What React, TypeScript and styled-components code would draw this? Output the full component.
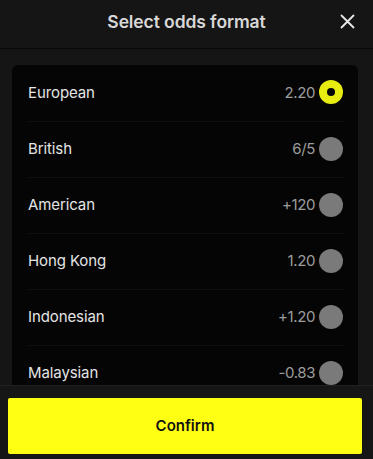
import { useState } from "react";
import styled, { createGlobalStyle } from "styled-components";

type OddsFormat = {
  id: string;
  label: string;
  value: string;
};

const FORMATS: OddsFormat[] = [
  { id: "eu", label: "European", value: "2.20" },
  { id: "uk", label: "British", value: "6/5" },
  { id: "us", label: "American", value: "+120" },
  { id: "hk", label: "Hong Kong", value: "1.20" },
  { id: "id", label: "Indonesian", value: "+1.20" },
  { id: "my", label: "Malaysian", value: "-0.83" },
];

const GlobalStyle = createGlobalStyle`
  html, body {
    margin: 0;
    padding: 0;
    background: #151515;
  }
  * {
    box-sizing: border-box;
  }
`;

const App = () => {
  const [selected, setSelected] = useState("eu");

  return (
    <>
      <GlobalStyle />
      <StyledModal>
        <StyledHeader>
          <StyledTitle>Select odds format</StyledTitle>
          <StyledClose aria-label="Close">
            <svg width="15" height="15" viewBox="0 0 15 15">
              <path
                d="M1.5 1.5 L13.5 13.5 M13.5 1.5 L1.5 13.5"
                stroke="#e8e8e8"
                strokeWidth="1.8"
                strokeLinecap="round"
              />
            </svg>
          </StyledClose>
        </StyledHeader>
        <StyledBody>
          <StyledList>
            {FORMATS.map((f) => (
              <StyledRow key={f.id} onClick={() => setSelected(f.id)}>
                <StyledLabel>{f.label}</StyledLabel>
                <StyledValue>{f.value}</StyledValue>
                <StyledRadio $active={selected === f.id} />
              </StyledRow>
            ))}
          </StyledList>
        </StyledBody>
        <StyledFooter>
          <StyledConfirm>Confirm</StyledConfirm>
        </StyledFooter>
      </StyledModal>
    </>
  );
};

const StyledModal = styled.div`
  height: 100vh;
  display: flex;
  flex-direction: column;
  background: #151515;
  font-family: Inter, "Liberation Sans", sans-serif;
`;

const StyledHeader = styled.div`
  height: 49px;
  flex: none;
  display: flex;
  align-items: center;
  justify-content: center;
  position: relative;
  border-bottom: 1px solid #080808;
`;

const StyledTitle = styled.h1`
  margin: 0;
  font-size: 17.5px;
  font-weight: 600;
  color: #d8d8d8;
  letter-spacing: -0.1px;
  padding-bottom: 5px;
`;

const StyledClose = styled.button`
  position: absolute;
  right: 18px;
  top: 14px;
  padding: 0;
  border: none;
  background: none;
  display: flex;
  cursor: pointer;
`;

const StyledBody = styled.div`
  flex: 1;
  min-height: 0;
  overflow: hidden;
  padding: 16px 15px 0 12px;
`;

const StyledList = styled.div`
  background: #050505;
  border-radius: 6px;
  padding: 0 15px 0 16px;
`;

const StyledRow = styled.div`
  height: 56px;
  display: flex;
  align-items: center;
  padding-bottom: 2px;
  cursor: pointer;
  & + & {
    border-top: 1px solid #101010;
  }
`;

const StyledLabel = styled.span`
  flex: 1;
  font-size: 15px;
  color: #e4e4e4;
  letter-spacing: -0.1px;
`;

const StyledValue = styled.span`
  font-size: 15px;
  color: #9c9c9c;
  letter-spacing: -0.4px;
  margin-right: 4px;
`;

const StyledRadio = styled.span<{ $active: boolean }>`
  width: 24px;
  height: 24px;
  border-radius: 50%;
  flex: none;
  position: relative;
  background: ${({ $active }) => ($active ? "#e8ec10" : "#7a7a7a")};
  &::after {
    content: "";
    display: ${({ $active }) => ($active ? "block" : "none")};
    position: absolute;
    left: 8px;
    top: 8px;
    width: 8px;
    height: 8px;
    border-radius: 50%;
    background: #050505;
  }
`;

const StyledFooter = styled.div`
  flex: none;
  height: 74px;
  padding: 12px 11px 5px 8px;
  background: #161616;
  border-top: 1px solid #202020;
`;

const StyledConfirm = styled.button`
  width: 100%;
  height: 56px;
  border: none;
  border-radius: 2px;
  background: #ffff14;
  color: #111;
  font-family: Inter, "Liberation Sans", sans-serif;
  font-size: 15px;
  font-weight: 600;
  padding-bottom: 3px;
  cursor: pointer;
`;

export default App;
